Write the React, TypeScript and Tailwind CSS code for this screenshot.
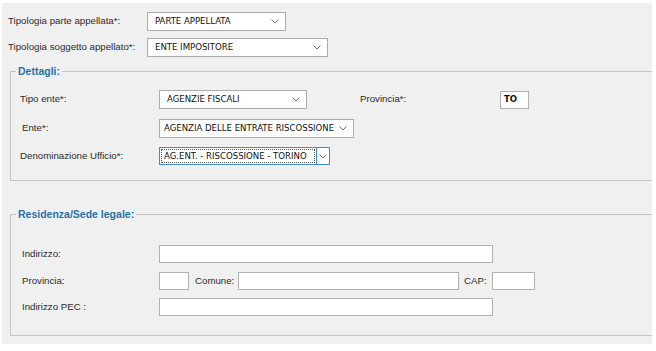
import React from 'react';

const labelFont = "font-['Liberation_Sans',Arial,sans-serif] text-[9.7px] text-[#2b2b2b]";
const valueFont = "font-['DejaVu_Sans_Condensed','Liberation_Sans',sans-serif] text-[9.5px] text-[#111]";

function Chevron() {
  return (
    <svg width="8" height="5" viewBox="0 0 8 5" className="shrink-0">
      <polyline points="0.5,0.5 4,4 7.5,0.5" fill="none" stroke="#777" strokeWidth="1" />
    </svg>
  );
}

function Select({ value, width, pad = 'pl-[7px]' }: { value: string; width: string; pad?: string }) {
  return (
    <div className={`${width} ${pad} flex h-[19px] items-center justify-between gap-[4px] border border-[#acacac] bg-white pr-[6px]`}>
      <span className={`${valueFont} whitespace-nowrap`}>{value}</span>
      <Chevron />
    </div>
  );
}

function FocusedSelect({ value }: { value: string }) {
  return (
    <div className="flex h-[18px] w-[171px] items-stretch border border-[#3f8ccc] bg-white">
      <div className="m-[1px] flex flex-1 items-center border border-dotted border-[#555] bg-white pl-[2px]">
        <span className={`${valueFont} whitespace-nowrap`}>{value}</span>
      </div>
      <div className="flex w-[13px] items-center justify-center border-l border-[#3f8ccc] bg-white">
        <Chevron />
      </div>
    </div>
  );
}

function Input({ width, value }: { width: string; value?: string }) {
  return (
    <div className={`${width} flex h-[18px] items-center border border-[#b1b1b1] bg-white pl-[3px]`}>
      {value && <span className={`${valueFont} font-bold`}>{value}</span>}
    </div>
  );
}

function Legend({ children }: { children: React.ReactNode }) {
  return (
    <legend className="ml-[5px] px-[2px] font-['Liberation_Sans',Arial,sans-serif] text-[10.5px] font-bold leading-[12px] text-[#2870a8]">
      {children}
    </legend>
  );
}

export default function App() {
  return (
    <div className="h-[351px] w-[656px] overflow-hidden bg-white">
      <div className="ml-[2px] mt-[3px] h-[341px] w-[650px] overflow-hidden bg-[#f0f0f0] pl-[6px] pt-[9px]">
        <div className="flex h-[19px] items-center">
          <span className={`${labelFont} w-[139px]`}>Tipologia parte appellata*:</span>
          <Select value="PARTE APPELLATA" width="w-[139px]" />
        </div>
        <div className="mt-[7px] flex h-[19px] items-center">
          <span className={`${labelFont} w-[139px]`}>Tipologia soggetto appellato*:</span>
          <Select value="ENTE IMPOSITORE" width="w-[181px]" />
        </div>

        <fieldset className="ml-[2px] mr-[-20px] mt-[8px] border border-[#c4c4c4]">
          <Legend>Dettagli:</Legend>
          <div className="pb-[15px] pl-[9px] pt-[13px]">
            <div className="flex h-[19px] items-center">
              <span className={`${labelFont} w-[139px]`}>Tipo ente*:</span>
              <Select value="AGENZIE FISCALI" width="w-[148px]" />
              <span className={`${labelFont} ml-[53px] w-[140px]`}>Provincia*:</span>
              <Input width="w-[29px] h-[17px]" value="TO" />
            </div>
            <div className="mt-[10px] flex h-[19px] items-center">
              <span className={`${labelFont} w-[139px] pl-[2px]`}>Ente*:</span>
              <Select value="AGENZIA DELLE ENTRATE RISCOSSIONE" width="w-[195px]" pad="pl-[4px]" />
            </div>
            <div className="mt-[9px] flex h-[18px] items-center">
              <span className={`${labelFont} w-[139px]`}>Denominazione Ufficio*:</span>
              <FocusedSelect value="AG.ENT. - RISCOSSIONE - TORINO" />
            </div>
          </div>
        </fieldset>

        <fieldset className="ml-[2px] mr-[-20px] mt-[27px] border border-[#c4c4c4]">
          <Legend>Residenza/Sede legale:</Legend>
          <div className="pb-[19px] pl-[11px] pt-[25px]">
            <div className="flex h-[18px] items-center">
              <span className={`${labelFont} w-[137px]`}>Indirizzo:</span>
              <Input width="w-[334px]" />
            </div>
            <div className="mt-[9px] flex h-[18px] items-center">
              <span className={`${labelFont} w-[137px]`}>Provincia:</span>
              <Input width="w-[30px]" />
              <span className={`${labelFont} ml-[6px] w-[43px]`}>Comune:</span>
              <Input width="w-[221px]" />
              <span className={`${labelFont} ml-[5px] w-[28px]`}>CAP:</span>
              <Input width="w-[43px]" />
            </div>
            <div className="mt-[8px] flex h-[18px] items-center">
              <span className={`${labelFont} w-[137px]`}>Indirizzo PEC :</span>
              <Input width="w-[334px]" />
            </div>
          </div>
        </fieldset>
      </div>
    </div>
  );
}
